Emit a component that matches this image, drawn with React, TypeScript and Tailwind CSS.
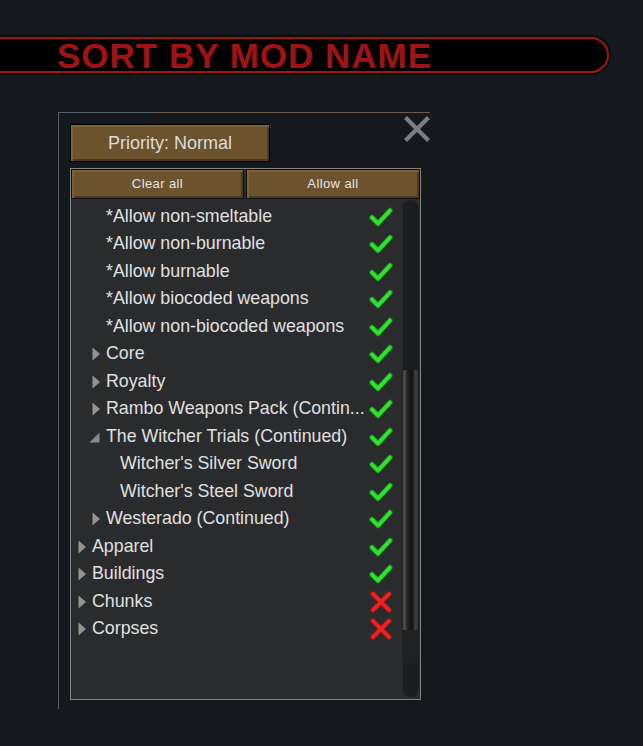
import React from "react";

type Row = { label: string; level: number; arrow: "none" | "right" | "down"; ok: boolean };

const rows: Row[] = [
  { label: "*Allow non-smeltable", level: 1, arrow: "none", ok: true },
  { label: "*Allow non-burnable", level: 1, arrow: "none", ok: true },
  { label: "*Allow burnable", level: 1, arrow: "none", ok: true },
  { label: "*Allow biocoded weapons", level: 1, arrow: "none", ok: true },
  { label: "*Allow non-biocoded weapons", level: 1, arrow: "none", ok: true },
  { label: "Core", level: 1, arrow: "right", ok: true },
  { label: "Royalty", level: 1, arrow: "right", ok: true },
  { label: "Rambo Weapons Pack (Contin...", level: 1, arrow: "right", ok: true },
  { label: "The Witcher Trials (Continued)", level: 1, arrow: "down", ok: true },
  { label: "Witcher's Silver Sword", level: 2, arrow: "none", ok: true },
  { label: "Witcher's Steel Sword", level: 2, arrow: "none", ok: true },
  { label: "Westerado (Continued)", level: 1, arrow: "right", ok: true },
  { label: "Apparel", level: 0, arrow: "right", ok: true },
  { label: "Buildings", level: 0, arrow: "right", ok: true },
  { label: "Chunks", level: 0, arrow: "right", ok: false },
  { label: "Corpses", level: 0, arrow: "right", ok: false },
];

const indentClass = ["pl-[7px]", "pl-[21px]", "pl-[35px]"];

function Check() {
  return (
    <svg width="24" height="20" viewBox="0 0 24 20">
      <polyline points="3,10.5 9,16.5 21,3.5" fill="none" stroke="#138a13" strokeWidth="5.5" strokeLinecap="round" strokeLinejoin="round" />
      <polyline points="3,10.5 9,16.5 21,3.5" fill="none" stroke="#35e035" strokeWidth="3.6" strokeLinecap="round" strokeLinejoin="round" />
    </svg>
  );
}

function Cross() {
  return (
    <svg width="24" height="22" viewBox="0 0 24 22">
      <g fill="none" strokeLinecap="round">
        <path d="M4,3 L20,19 M20,3 L4,19" stroke="#9a1414" strokeWidth="5.5" />
        <path d="M4,3 L20,19 M20,3 L4,19" stroke="#e62626" strokeWidth="3.6" />
      </g>
    </svg>
  );
}

function Arrow({ kind }: { kind: Row["arrow"] }) {
  if (kind === "right")
    return (
      <svg width="9" height="14" viewBox="0 0 9 14">
        <polygon points="0.5,0.5 8,7 0.5,13.5" fill="#939393" />
      </svg>
    );
  if (kind === "down")
    return (
      <svg width="11" height="11" viewBox="0 0 11 11" className="-ml-[3px] mt-[1px]">
        <polygon points="10.5,0.5 10.5,10.5 0.5,10.5" fill="#8a8a8a" />
      </svg>
    );
  return null;
}

export default function App() {
  return (
    <div className="w-[643px] h-[746px] bg-[#15181d] overflow-hidden pt-[35px] font-['Liberation_Sans',Arial,sans-serif]">
      {/* Banner */}
      <div className="w-[632px] h-[40px] -ml-[21px] rounded-r-full bg-[#0c0d0f] p-[2px]">
        <div className="h-full rounded-r-full border-2 border-[#a01616] bg-black flex items-center pl-[74px]">
          <span className="text-[35px] leading-none font-bold tracking-[1px] text-[#a01313] mt-[1px]">
            SORT BY MOD NAME
          </span>
        </div>
      </div>

      {/* Window */}
      <div className="relative ml-[58px] mt-[37px] w-[372px] h-[597px] border-l border-[#56616e]">
        <div className="flex h-px">
          <div className="w-[94px] bg-[#56616e]" />
          <div className="flex-1 bg-[#6e5b4b]" />
        </div>

        {/* close */}
        <div className="absolute left-[345px] top-[4px]">
          <svg width="26" height="26" viewBox="0 0 26 26">
            <path d="M3,3 L23,23 M23,3 L3,23" stroke="#7b7d80" strokeWidth="4.2" strokeLinecap="square" />
          </svg>
        </div>

        <div className="pl-[11px] pt-[11px]">
          {/* Priority */}
          <div className="w-[200px] h-[38px] border border-black bg-[#6a532d] shadow-[inset_2px_2px_0_#7d6437,inset_-2px_-2px_0_#4a3a1f] flex items-center justify-center text-[18px] text-[#dcdcdc]">
            Priority: Normal
          </div>

          {/* list */}
          <div className="mt-[6px] w-[351px] h-[532px] border border-[#808386] bg-[#2a2b2d] flex flex-col">
            <div className="flex gap-[2px] h-[30px]">
              <div className="w-[173px] border border-[#111] bg-[#6a532d] shadow-[inset_2px_2px_0_#7b6236,inset_-2px_-2px_0_#4a3a1f] flex items-center justify-center tracking-[0.4px] text-[#e6e6e6] text-[13px]">
                Clear all
              </div>
              <div className="flex-1 border border-[#111] bg-[#6a532d] shadow-[inset_2px_2px_0_#7b6236,inset_-2px_-2px_0_#4a3a1f] flex items-center justify-center tracking-[0.4px] text-[#e6e6e6] text-[13px]">
                Allow all
              </div>
            </div>

            <div className="flex flex-1">
              <div className="w-[331px] pt-[4px]">
                {rows.map((r, i) => (
                  <div key={i} className={`flex items-center h-[27.5px] ${indentClass[r.level]}`}>
                    <div className="w-[14px] flex items-center justify-start">
                      <Arrow kind={r.arrow} />
                    </div>
                    <div className="flex-1 text-[17.8px] text-[#e0e0e0] whitespace-nowrap leading-none">
                      {r.label}
                    </div>
                    <div className="w-[24px] mr-[9px] flex items-center justify-center">
                      {r.ok ? <Check /> : <Cross />}
                    </div>
                  </div>
                ))}
              </div>

              {/* scrollbar */}
              <div className="mt-[1px] w-[17px] h-[497px] rounded-[8px] bg-[#1c1d1e] relative shadow-[inset_1px_0_0_#262728]">
                <div className="absolute left-0 right-0 top-[170px] h-[294px] rounded-b-[8px] rounded-t-[3px] bg-[linear-gradient(to_right,#1a1a1a,#55555a_12%,#2a2a2b_28%,#161616_45%,#161616_62%,#444446_82%,#1a1a1a)]" />
                <div className="absolute left-0 right-0 top-[430px] h-[34px] rounded-b-[8px] bg-[#202122]" />
              </div>
            </div>
          </div>
        </div>
      </div>
    </div>
  );
}
